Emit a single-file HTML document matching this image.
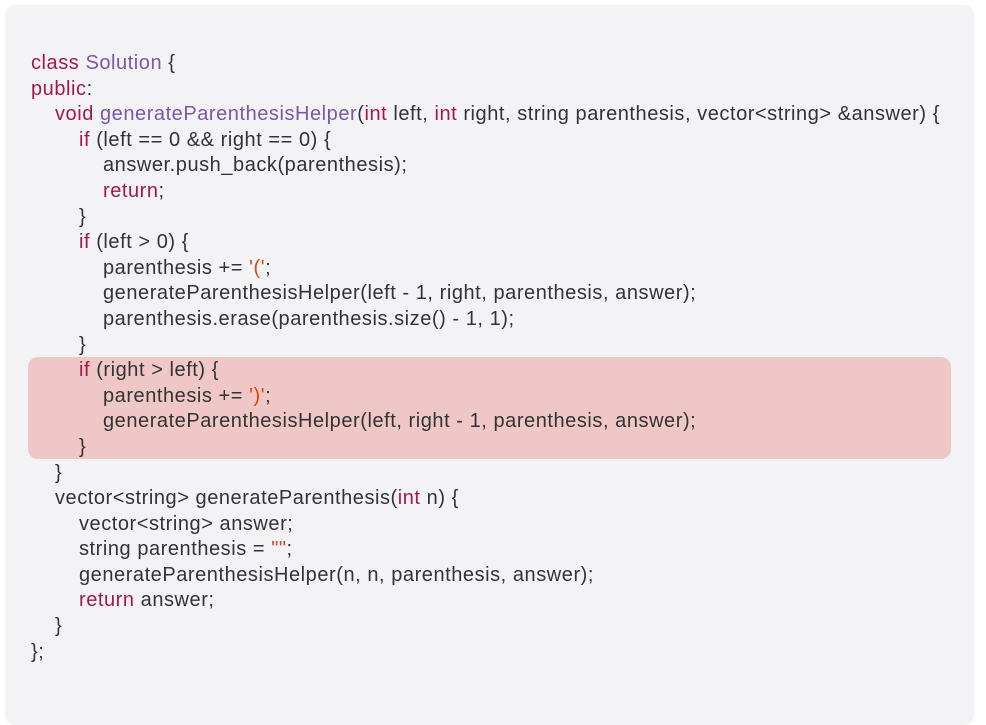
<!DOCTYPE html>
<html><head><style>
html,body{margin:0;padding:0;background:#fff;width:986px;height:693px;overflow:hidden}
.card{position:absolute;left:5px;top:5px;width:969px;height:720px;background:#f3f3f6;border-radius:10px}
.hl{position:absolute;left:28px;top:357px;width:923px;height:102px;background:#efc7c7;border-radius:10px}
.code{position:absolute;left:31px;top:51px;margin:0;font-family:"Liberation Sans",Arial,sans-serif;font-size:20px;letter-spacing:0.55px;line-height:25.6px;color:#333}
.code div{height:25.6px;white-space:pre}
.i1{padding-left:24px}.i2{padding-left:48px}.i3{padding-left:72px}
.k{color:#a3174d}.f{color:#7b57a6}.s{color:#d9480f}
</style></head><body>
<div class="card"></div><div class="hl"></div>
<div class="code"><div><span class="k">class</span> <span class="f">Solution</span> {</div><div><span class="k">public</span>:</div><div class="i1"><span class="k">void</span> <span class="f">generateParenthesisHelper</span>(<span class="k">int</span> left, <span class="k">int</span> right, string parenthesis, vector&lt;string&gt; &amp;answer) {</div><div class="i2"><span class="k">if</span> (left == 0 &amp;&amp; right == 0) {</div><div class="i3">answer.push_back(parenthesis);</div><div class="i3"><span class="k">return</span>;</div><div class="i2">}</div><div class="i2"><span class="k">if</span> (left &gt; 0) {</div><div class="i3">parenthesis += <span class="s">'('</span>;</div><div class="i3">generateParenthesisHelper(left - 1, right, parenthesis, answer);</div><div class="i3">parenthesis.erase(parenthesis.size() - 1, 1);</div><div class="i2">}</div><div class="i2"><span class="k">if</span> (right &gt; left) {</div><div class="i3">parenthesis += <span class="s">')'</span>;</div><div class="i3">generateParenthesisHelper(left, right - 1, parenthesis, answer);</div><div class="i2">}</div><div class="i1">}</div><div class="i1">vector&lt;string&gt; generateParenthesis(<span class="k">int</span> n) {</div><div class="i2">vector&lt;string&gt; answer;</div><div class="i2">string parenthesis = <span class="s">""</span>;</div><div class="i2">generateParenthesisHelper(n, n, parenthesis, answer);</div><div class="i2"><span class="k">return</span> answer;</div><div class="i1">}</div><div>};</div></div>
</body></html>
